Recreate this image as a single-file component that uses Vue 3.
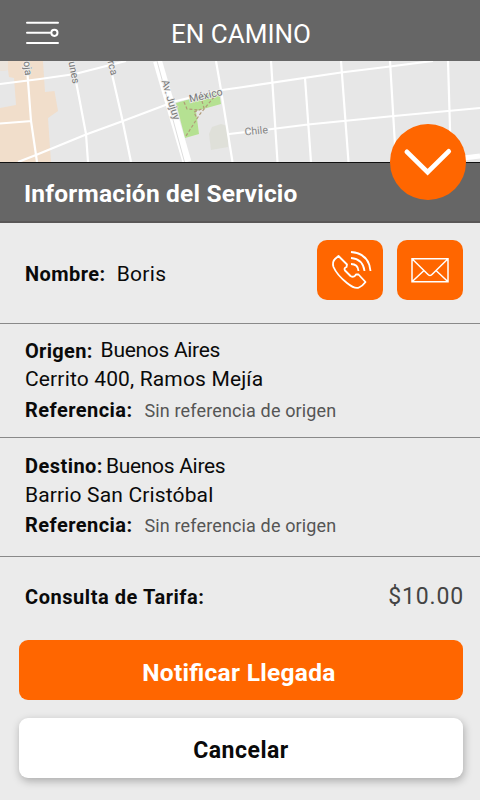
<script setup>
const trips = [
  { key: 'origin', label: 'Origen:', city: 'Buenos Aires', address: 'Cerrito 400, Ramos Mejía', reference: 'Sin referencia de origen' },
  { key: 'destination', label: 'Destino:', city: 'Buenos Aires', address: 'Barrio San Cristóbal', reference: 'Sin referencia de origen' },
]
</script>

<template>
  <main class="screen">
    <header class="topbar">
      <svg class="menu" viewBox="0 0 36 26" fill="none" stroke="#fff" stroke-width="2" stroke-linecap="round">
        <path d="M2 2.700H33M2 12.800H25M2 22.900H33" />
        <circle cx="29.400" cy="12.800" r="3.100" />
      </svg>
      <h1 class="heading">EN CAMINO</h1>
    </header>

    <section class="map">
      <svg class="streets" viewBox="0 61 480 101">
        <rect y="61" width="480" height="101" fill="#e7e7e7" />
        <path d="M0 61H43L45 92L54.500 91L58 111L48 118L51 162H0Z" fill="#f1decb" />
        <path d="M0 71L8 70L9 77L14 78L16 105L0 108Z" fill="#e7e7e7" />
        <path d="M0 61H8V70L0 71Z" fill="#ebe4dc" />
        <path d="M176 103L219 91L221 104L196 111L199 134L185 138Z" fill="#b5e192" />
        <path d="M184 102L187 109L199 110M202 101L204 108L194 112L197 119M214 97L200 114L186 136" fill="none" stroke="#b19a78" stroke-width="1.2" stroke-dasharray="3 2" />
        <path d="M212 127L221 124L228 126V147L211 150L209 134Z" fill="#dfe0d9" />
        <g fill="none" stroke="#fff" stroke-width="2.2">
          <path d="M0 84L40 79L75 74L126 61M26.500 61L31 121L37 162M0 123.500L32 121M72 61L79 97L86 134L88 162M109 61L122 118L131 162" />
          <path d="M18 162L36 155L86 134.500L123 121L176 101L222 90L240 87.500L341 72.500L390 66.500L433 61" />
          <path d="M216 61L221 90L232.500 162M229 134L268 129.500L308 124.500L394 116L480 108M271 61L277.500 162M305 78L311 162M341 61L348.500 162M390 61L396 162M448 61L451 162" />
        </g>
        <path d="M157.500 61L187 162" stroke="#fff" stroke-width="9" />
        <path d="M157 61L184.500 162" stroke="#dedede" stroke-width="1" />
        <path d="M460 158.500L480 156" stroke="#fff" stroke-width="5" />
        <g class="street-names">
          <text transform="translate(23.500 61.500) rotate(84)">oja</text>
          <text transform="translate(68.500 62) rotate(79)">unes</text>
          <text transform="translate(107.500 61.500) rotate(76)">rca</text>
          <text transform="translate(161.500 81) rotate(73)">Av. Jujuy</text>
          <text transform="translate(190 102.500) rotate(-13)">México</text>
          <text transform="translate(245 135.500) rotate(-6)" class="minor">Chile</text>
        </g>
      </svg>
      <button class="collapse" aria-label="Ocultar">
        <svg viewBox="0 0 76 76" fill="none" stroke="#fff" stroke-width="4.800" stroke-linecap="round"><path d="M17 28L37.800 48.500L59 27.500" /></svg>
      </button>
    </section>

    <h2 class="title">Información del Servicio</h2>

    <section class="client">
      <p class="row client-name"><b class="label">Nombre:</b><span class="value name">Boris</span></p>
      <div class="actions">
        <button class="action" aria-label="Llamar">
          <svg viewBox="0 0 66 60" fill="none" stroke="#fff" stroke-width="1.800" stroke-linejoin="round">
            <path d="M21.500 16L30 24.500L29.500 27Q26.500 28 28 30.500L33.500 36Q37 38 39 34.500L41.500 34.500L48.500 42Q45.500 46 42 47.500Q38 49.500 30 43Q20 35 16.500 27Q15 22 18 19Z" />
            <path d="M34 12Q52 13.500 53.500 31M34 18Q46 19 47.500 31M34 24Q41 24 41.500 31" />
          </svg>
        </button>
        <button class="action" aria-label="Mensaje">
          <svg viewBox="0 0 66 60" fill="none" stroke="#fff" stroke-width="1.500">
            <path d="M15 18.700H51V41.800H15ZM15 18.700L30.500 34Q33 37 35.500 34L51 18.700M15 41.800L27 30.500M51 41.800L39 30.500" />
          </svg>
        </button>
      </div>
    </section>

    <section v-for="trip in trips" :key="trip.key" class="trip" :class="trip.key">
      <p class="row place"><b class="label">{{ trip.label }}</b><span class="value city">{{ trip.city }}</span></p>
      <p class="value address">{{ trip.address }}</p>
      <p class="row reference"><b class="label">Referencia:</b><span class="note">{{ trip.reference }}</span></p>
    </section>

    <section class="fare">
      <b class="label fare-label">Consulta de Tarifa:</b>
      <span class="price">$10.00</span>
    </section>

    <footer class="buttons">
      <button class="button primary">Notificar Llegada</button>
      <button class="button secondary">Cancelar</button>
    </footer>
  </main>
</template>

<style>
body { margin: 0; background: #ebebeb; }
</style>

<style scoped>
.screen { width: 480px; height: 800px; overflow: hidden; background: #ebebeb; color: #0a0a0a; font-family: Roboto, sans-serif; box-sizing: border-box; }
.screen * { box-sizing: border-box; }
h1, h2, p { margin: 0; }
button { border: 0; padding: 0; font-family: inherit; }
svg { display: block; }
.topbar { display: grid; grid-template-columns: 73px 1fr 71px; align-items: center; height: 61px; padding-top: 5px; background: #666; }
.menu { width: 36px; height: 26px; margin-left: 25px; }
.heading { padding-top: 2px; color: #fff; font-size: 26px; font-weight: 400; line-height: 30px; text-align: center; white-space: nowrap; }
.map { position: relative; height: 102px; border-bottom: 1px solid #111; }
.streets { width: 480px; height: 101px; }
.street-names { fill: #777; font-size: 10.5px; stroke: #ededed; stroke-width: 1.5px; paint-order: stroke; }
.minor { fill: #858585; }
.collapse { position: absolute; right: 14.2px; bottom: -38px; width: 75.6px; height: 75.6px; border-radius: 50%; background: #ff6600; }
.title { height: 60px; padding: 0 24px; border-bottom: 2px solid #595757; background: #666; color: #fff; font-size: 24.5px; font-weight: 700; line-height: 61px; letter-spacing: 0.2px; }
.client { display: flex; justify-content: space-between; align-items: center; height: 101px; padding: 0 17px 6px 25px; border-bottom: 1px solid #898989; }
.client-name { padding-top: 7px; }
.row { display: flex; align-items: baseline; }
.label { font-size: 20px; font-weight: 700; letter-spacing: 0.45px; white-space: nowrap; }
.value { font-size: 21px; white-space: nowrap; }
.name { margin-left: 11px; letter-spacing: 0.3px; }
.actions { display: flex; gap: 13.5px; margin-right: 0.3px; }
.action { width: 66px; height: 60px; border-radius: 10px; background: #ff6600; }
.trip { padding-left: 25px; border-bottom: 1px solid #898989; line-height: 30px; }
.origin { height: 114px; padding-top: 12px; }
.destination { height: 119px; padding-top: 13px; }
.origin .place { align-items: flex-start; height: 28px; }
.origin .place .label { letter-spacing: 0.3px; }
.origin .city { line-height: 28px; }
.destination .place { height: 29px; }
.city { margin-left: 8px; letter-spacing: -0.3px; }
.destination .city { margin-left: 3px; }
.address { height: 31px; letter-spacing: 0.15px; }
.destination .address { height: 30px; }
.reference { height: 31px; }
.note { margin-left: 12px; color: #555; font-size: 18px; letter-spacing: 0.14px; }
.fare { display: flex; align-items: baseline; justify-content: space-between; height: 83px; padding: 24px 16px 0 25px; line-height: 32px; }
.fare-label { letter-spacing: 0.55px; }
.price { color: #444; font-size: 23px; letter-spacing: 0.85px; }
.buttons { display: grid; gap: 18px; padding: 0 17px 0 19px; }
.button { height: 60px; border-radius: 9px; }
.primary { padding: 5px 4px 0 0; background: #ff6600; color: #fff; font-size: 24.5px; font-weight: 700; letter-spacing: 0.3px; font-feature-settings: "liga" 1; }
.secondary { padding-top: 5px; background: #fff; color: #0a0a0a; font-size: 23px; font-weight: 700; letter-spacing: 0.5px; box-shadow: 1px 3px 9px rgba(0, 0, 0, 0.28); }
</style>
